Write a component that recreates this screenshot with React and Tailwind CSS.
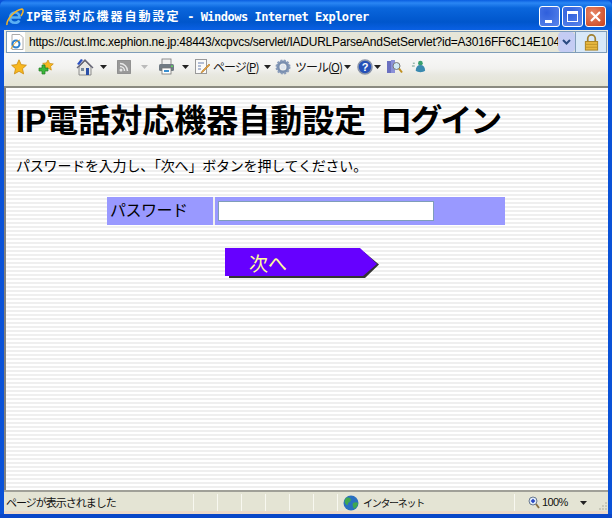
import React from "react";

const JP = "font-['Noto_Sans_CJK_JP','Liberation_Sans',sans-serif]";

const Caret = ({ color = "#222" }) => (
  <svg width="7" height="4" viewBox="0 0 7 4" className="shrink-0">
    <path d="M0 0h7L3.5 4z" fill={color} />
  </svg>
);

const IeLogo = () => (
  <svg width="18" height="18" viewBox="0 0 18 18" className="shrink-0">
    <path
      d="M4 9.500h9.500C13.500 6.500 11.500 4.500 9 4.500S4 6.500 4 9.800s2.200 5 5 5c2 0 3.500-1 4.300-2.500"
      fill="none"
      stroke="#5ab0f4"
      strokeWidth="2.600"
    />
    <path d="M1 17C0 12 9 2 16 1c2 1 1 4-1 7" fill="none" stroke="#f4b428" strokeWidth="1.500" />
  </svg>
);

const Star = ({ size = 16 }) => (
  <svg width={size} height={size} viewBox="0 0 16 16" className="shrink-0">
    <path d="M8 .8l2.200 4.800 5.200.6-3.900 3.500 1.100 5.200L8 12.300l-4.600 2.600 1.100-5.200L.6 6.200l5.200-.6z" fill="#f8b820" stroke="#c98a10" strokeWidth=".8" />
  </svg>
);

const AddStar = () => (
  <svg width="16" height="16" viewBox="0 0 16 16" className="shrink-0">
    <path d="M10 1l1.600 3.400 3.700.5-2.700 2.500.7 3.700L10 9l-3.300 1.600.7-3.700-2.700-2.500 3.700-.5z" fill="#f8b820" stroke="#c98a10" strokeWidth=".7" />
    <path d="M4 6h3v3h3v3H7v3H4v-3H1V9h3z" fill="#3cb83c" stroke="#1f7a1f" strokeWidth=".7" />
  </svg>
);

const Home = () => (
  <svg width="18" height="18" viewBox="0 0 18 18" className="shrink-0">
    <path d="M3 9v8h12V9L9 3z" fill="#e8e8e4" stroke="#777" strokeWidth=".8" />
    <path d="M1 10l8-8 8 8" fill="none" stroke="#667" strokeWidth="1.400" />
    <path d="M1 6l4-5 2 1-4 5z" fill="#2a4fc0" />
    <rect x="10" y="10" width="3" height="7" fill="#2a4fa8" />
    <rect x="5" y="10" width="3" height="3" fill="#7a8a9a" />
  </svg>
);

const Rss = () => (
  <svg width="14" height="14" viewBox="0 0 14 14" className="shrink-0">
    <rect width="14" height="14" rx="2" fill="#999" stroke="#888" />
    <circle cx="4" cy="10" r="1.500" fill="#e8e8e8" />
    <path d="M3 6.500a4.500 4.500 0 0 1 4.500 4.500M3 3.500a7.500 7.500 0 0 1 7.500 7.500" fill="none" stroke="#e8e8e8" strokeWidth="1.500" />
  </svg>
);

const Printer = () => (
  <svg width="17" height="17" viewBox="0 0 17 17" className="shrink-0">
    <rect x="4" y="1" width="9" height="6" fill="#f0f0f0" stroke="#777" strokeWidth=".8" />
    <rect x="1" y="6" width="15" height="7" rx="1.500" fill="#707a84" />
    <rect x="4" y="10" width="9" height="6" fill="#fff" stroke="#777" strokeWidth=".8" />
    <rect x="6" y="12" width="5" height="2" fill="#3a90d0" />
    <rect x="13" y="7.500" width="2" height="1.500" fill="#5fd05f" />
  </svg>
);

const PageIcon = () => (
  <svg width="17" height="17" viewBox="0 0 17 17" className="shrink-0">
    <rect x="1.500" y="1.500" width="11" height="14" fill="#fafafa" stroke="#9a9a9a" />
    <path d="M4 5h6M4 8h3M4 11h3" stroke="#6a80b0" strokeWidth="1" />
    <path d="M8 13l7-7 1 1-7 7-2 1z" fill="#e8a040" stroke="#a07020" strokeWidth=".5" />
  </svg>
);

const Gear = () => (
  <svg width="16" height="16" viewBox="0 0 16 16" className="shrink-0">
    <circle cx="8" cy="8" r="5" fill="none" stroke="#7a8fb0" strokeWidth="3" />
    <circle cx="8" cy="8" r="6.500" fill="none" stroke="#8a9cba" strokeWidth="2" strokeDasharray="2 1.400" />
    <circle cx="8" cy="8" r="2.500" fill="#dfe6f0" />
  </svg>
);

const Help = () => (
  <svg width="16" height="16" viewBox="0 0 16 16" className="shrink-0">
    <circle cx="8" cy="8" r="7" fill="#2450b8" stroke="#8a94a8" strokeWidth="1.600" />
    <text x="8" y="12" textAnchor="middle" fontSize="11" fontWeight="700" fontFamily="Liberation Sans" fill="#fff">?</text>
  </svg>
);

const Research = () => (
  <svg width="17" height="17" viewBox="0 0 17 17" className="shrink-0">
    <rect x="1" y="3" width="4" height="12" fill="#6a70c0" />
    <rect x="5" y="2" width="4" height="13" fill="#8a90d8" />
    <circle cx="10.500" cy="8" r="3.500" fill="#cfe8f5" stroke="#777" />
    <path d="M13 10.500l3 4" stroke="#c09020" strokeWidth="2" />
  </svg>
);

const Messenger = () => (
  <svg width="16" height="17" viewBox="0 0 17 17" className="shrink-0">
    <circle cx="10" cy="5" r="2.500" fill="#3aa070" />
    <path d="M5 13c0-4 2-6 5-6s5 2 5 6c-2 2-8 2-10 0z" fill="#3a8ab0" />
    <path d="M1 8h3M2 5h2" stroke="#6a9a8a" strokeWidth="1" />
  </svg>
);

const Lock = () => (
  <svg width="15" height="17" viewBox="0 0 14 18">
    <path d="M3 8V5a4 4 0 0 1 8 0v3" fill="none" stroke="#a08030" strokeWidth="1.800" />
    <rect x="0.500" y="8" width="13" height="9" fill="#e8b840" stroke="#a88020" />
    <path d="M1 11h12M1 14h12" stroke="#c09428" />
  </svg>
);

const Globe = () => (
  <svg width="16" height="16" viewBox="0 0 16 16" className="shrink-0">
    <circle cx="8" cy="8" r="7.500" fill="#2a70c0" />
    <path d="M3 3c3-1 5 0 5 2S5 7 5 9s-2 1-3-1 0-4 1-5zM10 8c2-1 4-1 5 0 0 3-2 5-4 6-1-2-2-4-1-6z" fill="#3fa850" />
  </svg>
);

const Zoom = () => (
  <svg width="12" height="13" viewBox="0 0 12 13" className="shrink-0">
    <circle cx="5" cy="5" r="4" fill="#dce8f8" stroke="#6a7a90" />
    <path d="M3 5h4M5 3v4" stroke="#2040c0" strokeWidth="1.500" />
    <path d="M8 8l3 4" stroke="#8a7040" strokeWidth="1.800" />
  </svg>
);

const Grip = () => (
  <svg width="10" height="10" viewBox="0 0 10 10" className="shrink-0">
    <path d="M7 1h2v2H7zM4 4h2v2H4zM7 4h2v2H7zM1 7h2v2H1zM4 7h2v2H4zM7 7h2v2H7z" fill="#c8c8b8" />
  </svg>
);

const WinBtn = ({ red, children }) => (
  <div
    className={`relative w-[21px] h-[21px] rounded-[3px] border border-white flex items-center justify-center ${
      red
        ? "bg-[radial-gradient(circle_at_35%_35%,#e88868,#c8401c)]"
        : "bg-[radial-gradient(circle_at_35%_30%,#2f5fdc,#5a86ec)]"
    }`}
  >
    {children}
  </div>
);

export default function App() {
  return (
    <div className={`w-[612px] h-[518px] flex flex-col overflow-hidden bg-[#0a52d8] ${JP}`}>
      {/* title bar */}
      <div className="h-[30px] shrink-0 pl-[6px] pr-[6px] pt-[3px] flex items-center rounded-t-md bg-[linear-gradient(to_bottom,#0a5ee0_0,#2a86f4_3px,#0a66dc_8px,#0056cc_22px,#0a60e4_30px)]">
        <IeLogo />
        <span className="ml-[2px] text-[12px] font-bold text-white font-['DejaVu_Sans_Mono','Noto_Sans_CJK_JP',monospace] whitespace-nowrap">
          IP<span className="tracking-[2px]">電話対応機器自動設定</span>
          <span className="tracking-[-0.5px]"> - Windows Internet Explorer</span>
        </span>
        <div className="ml-auto flex gap-[2px]">
          <WinBtn>
            <div className="w-[7px] h-[3px] bg-white mt-[9px] mr-[3px]" />
          </WinBtn>
          <WinBtn>
            <div className="w-[11px] h-[11px] border border-white border-t-[3px]" />
          </WinBtn>
          <WinBtn red>
            <svg width="11" height="11" viewBox="0 0 11 11">
              <path d="M1 1l9 9M10 1l-9 9" stroke="#fff" strokeWidth="2.200" />
            </svg>
          </WinBtn>
        </div>
      </div>

      {/* chrome */}
      <div className="flex-1 min-h-0 mx-[4px] flex flex-col bg-[#ecebdf]">
        {/* address row */}
        <div className="h-[22px] shrink-0 ml-[2px] mt-px mr-px flex border border-[#7f9db9] bg-[#e6e6d8]">
          <div className="w-[18px] bg-white flex items-center justify-center shrink-0">
            <svg width="15" height="16" viewBox="0 0 15 16">
              <path d="M3 .5h8l3 3v12H3z" fill="#fff" stroke="#aaa" />
              <circle cx="7" cy="10" r="3.500" fill="none" stroke="#2a80d0" strokeWidth="2" />
              <path d="M2 15c2-4 5-8 9-9" fill="none" stroke="#e8a020" strokeWidth="1" />
            </svg>
          </div>
          <div className="flex-1 min-w-0 overflow-hidden pl-[4px] text-[12px] leading-[20px] text-black tracking-[-0.25px] font-['Liberation_Sans',sans-serif] whitespace-nowrap">
            https://cust.lmc.xephion.ne.jp:48443/xcpvcs/servlet/IADURLParseAndSetServlet?id=A3016FF6C14E104
          </div>
          <div className="w-[17px] shrink-0 rounded-sm bg-[#c4ccf4] flex items-center justify-center">
            <svg width="9" height="7" viewBox="0 0 9 7">
              <path d="M1 1l3.500 3.500L8 1" fill="none" stroke="#2a4a80" strokeWidth="2" />
            </svg>
          </div>
          <div className="w-[31px] shrink-0 bg-[#d8e8f8] border-l border-[#7f9db9] flex items-center justify-center">
            <Lock />
          </div>
        </div>

        {/* toolbar */}
        <div className="h-[35px] shrink-0 pl-[7px] pb-[6px] flex items-center bg-[linear-gradient(to_bottom,#f8f8f8_0,#f2f2f0_15px,#e8e8e0_22px,#e4e4d4_100%)] border-b-2 border-[#8a8a80] text-[12px] text-[#111]">
          <Star />
          <div className="ml-[11px]">
            <AddStar />
          </div>
          <div className="ml-[22px]">
            <Home />
          </div>
          <div className="ml-[6px]">
            <Caret />
          </div>
          <div className="ml-[10px]">
            <Rss />
          </div>
          <div className="ml-[10px]">
            <Caret color="#bbb" />
          </div>
          <div className="ml-[10px]">
            <Printer />
          </div>
          <div className="ml-[7px]">
            <Caret />
          </div>
          <div className="ml-[5px]">
            <PageIcon />
          </div>
          <span className="ml-[2px] w-[46px] tracking-[-1px] whitespace-nowrap">
            ページ(<span className="underline">P</span>)
          </span>
          <div className="ml-[5px]">
            <Caret />
          </div>
          <div className="ml-[4px]">
            <Gear />
          </div>
          <span className="ml-[4px] w-[46px] tracking-[-1px] whitespace-nowrap">
            ツール(<span className="underline">O</span>)
          </span>
          <div className="ml-[3px]">
            <Caret />
          </div>
          <div className="ml-[6px]">
            <Help />
          </div>
          <div className="ml-px">
            <Caret />
          </div>
          <div className="ml-[5px]">
            <Research />
          </div>
          <div className="ml-[8px]">
            <Messenger />
          </div>
        </div>

        {/* page */}
        <div className="flex-1 min-h-0 border-l-2 border-[#808080] bg-[repeating-linear-gradient(to_bottom,#ffffff_0,#ffffff_2px,#efefef_2px,#efefef_4px)] pl-[10px]">
          <h1 className="mt-[15px] text-[32px] leading-[36px] font-bold text-black whitespace-nowrap font-['Liberation_Sans','Noto_Sans_CJK_JP',sans-serif]">
            IP電話対応機器自動設定
            <span className="ml-[14px] tracking-[-2px]">ログイン</span>
          </h1>
          <p className="mt-[16px] text-[14px] leading-[20px] text-black tracking-[-0.2px]">
            パスワードを入力し、「次へ」ボタンを押してください。
          </p>
          <div className="ml-[91px] mt-[22px] w-[398px] h-[28px] flex bg-[#9999ff]">
            <div className="w-[108px] pl-[3px] text-[16px] leading-[24px] text-black tracking-[-0.5px] border-r-2 border-[#f0f0f0]">
              パスワード
            </div>
            <div className="pl-[3px] pt-[4px]">
              <input
                type="text"
                className="block w-[216px] h-[20px] bg-white border border-[#7f9db9] outline-none"
              />
            </div>
          </div>
          <div className="ml-[209px] mt-[23px] relative w-[155px] h-[30px]">
            <svg width="155" height="30" viewBox="0 0 155 30" className="absolute left-0 top-0">
              <path d="M4 4h135l15 12.500L140 30H4z" fill="#333" />
              <path d="M0 0h135l17 16-14 12H0z" fill="#6600ff" />
            </svg>
            <span className="absolute left-[24px] top-[2px] text-[19px] leading-[26px] text-[#ffff99]">次へ</span>
          </div>
        </div>

        {/* status bar */}
        <div className="h-[24px] shrink-0 pt-[2px] flex items-center bg-[#e4e4d4] border-t-2 border-[#a0a098] text-[11px] text-[#111] border-b-[3px] border-b-[#ecd8c8]">
          <span className="w-[189px] pl-[2px] tracking-[-1px] whitespace-nowrap">ページが表示されました</span>
          <div className="w-[24px] h-full border-l border-[#f8f8f0]" />
          <div className="w-[24px] h-full border-l border-[#f8f8f0]" />
          <div className="w-[24px] h-full border-l border-[#f8f8f0]" />
          <div className="w-[24px] h-full border-l border-[#f8f8f0]" />
          <div className="w-[24px] h-full border-l border-[#f8f8f0]" />
          <div className="w-[24px] h-full border-l border-[#f8f8f0]" />
          <div className="w-[177px] h-full border-l border-[#f8f8f0] pl-[5px] flex items-center">
            <Globe />
            <span className="ml-[4px] text-[10px] tracking-[-1.3px] whitespace-nowrap">インターネット</span>
          </div>
          <div className="flex-1 h-full border-l border-[#f8f8f0] pl-[13px] flex items-center">
            <Zoom />
            <span className="ml-[2px] font-['Liberation_Sans',sans-serif] text-[11px] tracking-[-0.6px]">100%</span>
            <div className="ml-[12px]">
              <Caret />
            </div>
            <div className="ml-auto self-end">
              <Grip />
            </div>
          </div>
        </div>
      </div>

      {/* bottom frame */}
      <div className="h-[4px] shrink-0 bg-[#0a46c8]" />
    </div>
  );
}
